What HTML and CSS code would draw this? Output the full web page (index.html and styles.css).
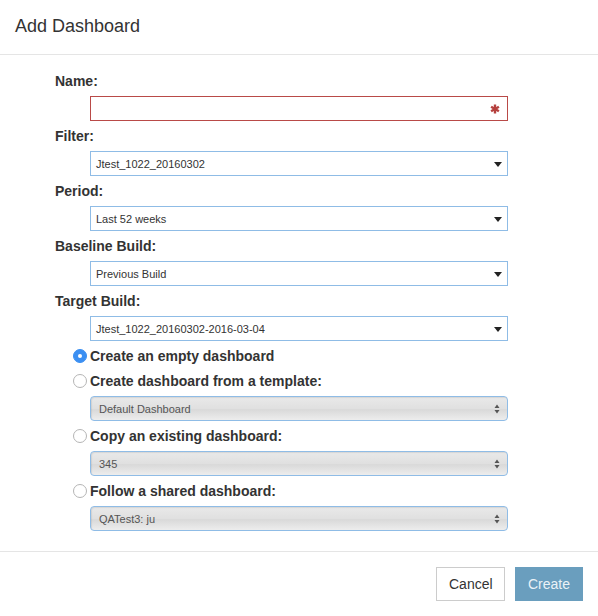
FILE: index.html
```html
<!DOCTYPE html>
<html>
<head>
<meta charset="utf-8">
<link rel="stylesheet" href="styles.css">
</head>
<body>
<div class="modal">
  <div class="modal-header"><h4 class="title">Add Dashboard</h4></div>
  <div class="modal-body">
    <div class="field">
      <label class="label">Name:</label>
      <div class="input input-error">
        <svg class="asterisk" width="10" height="10" viewBox="0 0 10 10"><g stroke="#b5403e" stroke-width="2.4" stroke-linecap="butt"><line x1="5" y1="0.5" x2="5" y2="9.5"/><line x1="1.1" y1="2.75" x2="8.9" y2="7.25"/><line x1="1.1" y1="7.25" x2="8.9" y2="2.75"/></g></svg>
      </div>
    </div>
    <div class="field">
      <label class="label">Filter:</label>
      <div class="input select"><span>Jtest_1022_20160302</span><span class="caret"></span></div>
    </div>
    <div class="field">
      <label class="label">Period:</label>
      <div class="input select"><span>Last 52 weeks</span><span class="caret"></span></div>
    </div>
    <div class="field">
      <label class="label">Baseline Build:</label>
      <div class="input select"><span>Previous Build</span><span class="caret"></span></div>
    </div>
    <div class="field">
      <label class="label">Target Build:</label>
      <div class="input select"><span>Jtest_1022_20160302-2016-03-04</span><span class="caret"></span></div>
    </div>
    <div class="options">
      <div class="radio-row"><span class="radio checked"></span><span class="radio-label">Create an empty dashboard</span></div>
      <div class="radio-row"><span class="radio"></span><span class="radio-label">Create dashboard from a template:</span></div>
      <div class="gray-select"><span>Default Dashboard</span><svg class="updown" width="6" height="10" viewBox="0 0 6 10"><path d="M3 0.5 L5.5 4 L0.5 4 Z M3 9.5 L5.5 6 L0.5 6 Z" fill="#555"/></svg></div>
      <div class="radio-row"><span class="radio"></span><span class="radio-label">Copy an existing dashboard:</span></div>
      <div class="gray-select"><span>345</span><svg class="updown" width="6" height="10" viewBox="0 0 6 10"><path d="M3 0.5 L5.5 4 L0.5 4 Z M3 9.5 L5.5 6 L0.5 6 Z" fill="#555"/></svg></div>
      <div class="radio-row"><span class="radio"></span><span class="radio-label">Follow a shared dashboard:</span></div>
      <div class="gray-select"><span>QATest3: ju</span><svg class="updown" width="6" height="10" viewBox="0 0 6 10"><path d="M3 0.5 L5.5 4 L0.5 4 Z M3 9.5 L5.5 6 L0.5 6 Z" fill="#555"/></svg></div>
    </div>
  </div>
  <div class="modal-footer">
    <button class="btn btn-default">Cancel</button>
    <button class="btn btn-primary">Create</button>
  </div>
</div>
</body>
</html>
```
FILE: styles.css
```css
* { box-sizing: border-box; }
html, body { margin: 0; padding: 0; background: #fff; }
body {
  font-family: "Liberation Sans", Arial, sans-serif;
  color: #333;
  width: 598px;
  height: 616px;
}
.modal { width: 598px; }
.modal-header {
  height: 55px;
  border-bottom: 1px solid #e5e5e5;
  padding: 0 15px;
  display: flex;
  align-items: center;
}
.title {
  margin: 0;
  font-size: 18px;
  font-weight: normal;
  color: #333;
  line-height: 20px;
  padding-bottom: 2px;
}
.modal-body {
  padding: 16px 90px 20px 55px;
  display: flex;
  flex-direction: column;
  gap: 5px;
}
.field { display: flex; flex-direction: column; gap: 5px; }
.label {
  font-size: 14px;
  font-weight: bold;
  line-height: 20px;
  height: 20px;
  color: #333;
}
.input {
  margin-left: 35px;
  height: 25px;
  border: 1px solid #8fbce6;
  background: #fff;
  display: flex;
  align-items: center;
  padding: 0 5px;
  font-size: 11px;
  color: #333;
}
.input-error {
  border-color: #b94a48;
  justify-content: flex-end;
  padding-right: 7px;
}
.asterisk { display: block; }
.select { justify-content: space-between; padding-right: 5px; }
.caret {
  width: 0; height: 0;
  border-left: 4.5px solid transparent;
  border-right: 4.5px solid transparent;
  border-top: 5px solid #222;
  margin-top: 1px;
}
.options { display: flex; flex-direction: column; gap: 5px; }
.radio-row {
  height: 20px;
  display: flex;
  align-items: center;
  padding-left: 18px;
  gap: 3px;
}
.radio {
  width: 14px; height: 14px;
  border-radius: 50%;
  border: 1px solid #b5b5b5;
  background: #fff;
  flex: none;
  position: relative;
}
.radio.checked {
  background: #3b8ff2;
  border-color: #3b8ff2;
}
.radio.checked::after {
  content: "";
  position: absolute;
  left: 4px; top: 4px;
  width: 4px; height: 4px;
  border-radius: 50%;
  background: #fff;
}
.radio-label {
  font-size: 14px;
  font-weight: bold;
  line-height: 20px;
  color: #333;
}
.gray-select {
  margin-left: 35px;
  height: 25px;
  border: 1px solid #8fbce6;
  border-radius: 4px;
  background: linear-gradient(#e9e9e9 0%, #e0e0e0 50%, #d9d9d9 55%, #ededed 100%);
  box-shadow: inset 1px 1px 1px rgba(0,0,0,0.08);
  display: flex;
  align-items: center;
  justify-content: space-between;
  padding: 0 7px 0 8px;
  font-size: 11px;
  color: #555;
}
.updown { display: block; }
.modal-footer {
  border-top: 1px solid #e5e5e5;
  padding: 15px 15px 15px;
  display: flex;
  justify-content: flex-end;
  gap: 10px;
}
.btn {
  height: 34px;
  font-family: "Liberation Sans", Arial, sans-serif;
  font-size: 14px;
  padding: 0 12px;
  border-radius: 0;
  cursor: pointer;
}
.btn-default {
  background: #fff;
  border: 1px solid #ccc;
  color: #333;
  width: 69px;
}
.btn-primary {
  background: #6a9ebe;
  border: 1px solid #6a9ebe;
  color: #eaf2f7;
  width: 68px;
}
```
